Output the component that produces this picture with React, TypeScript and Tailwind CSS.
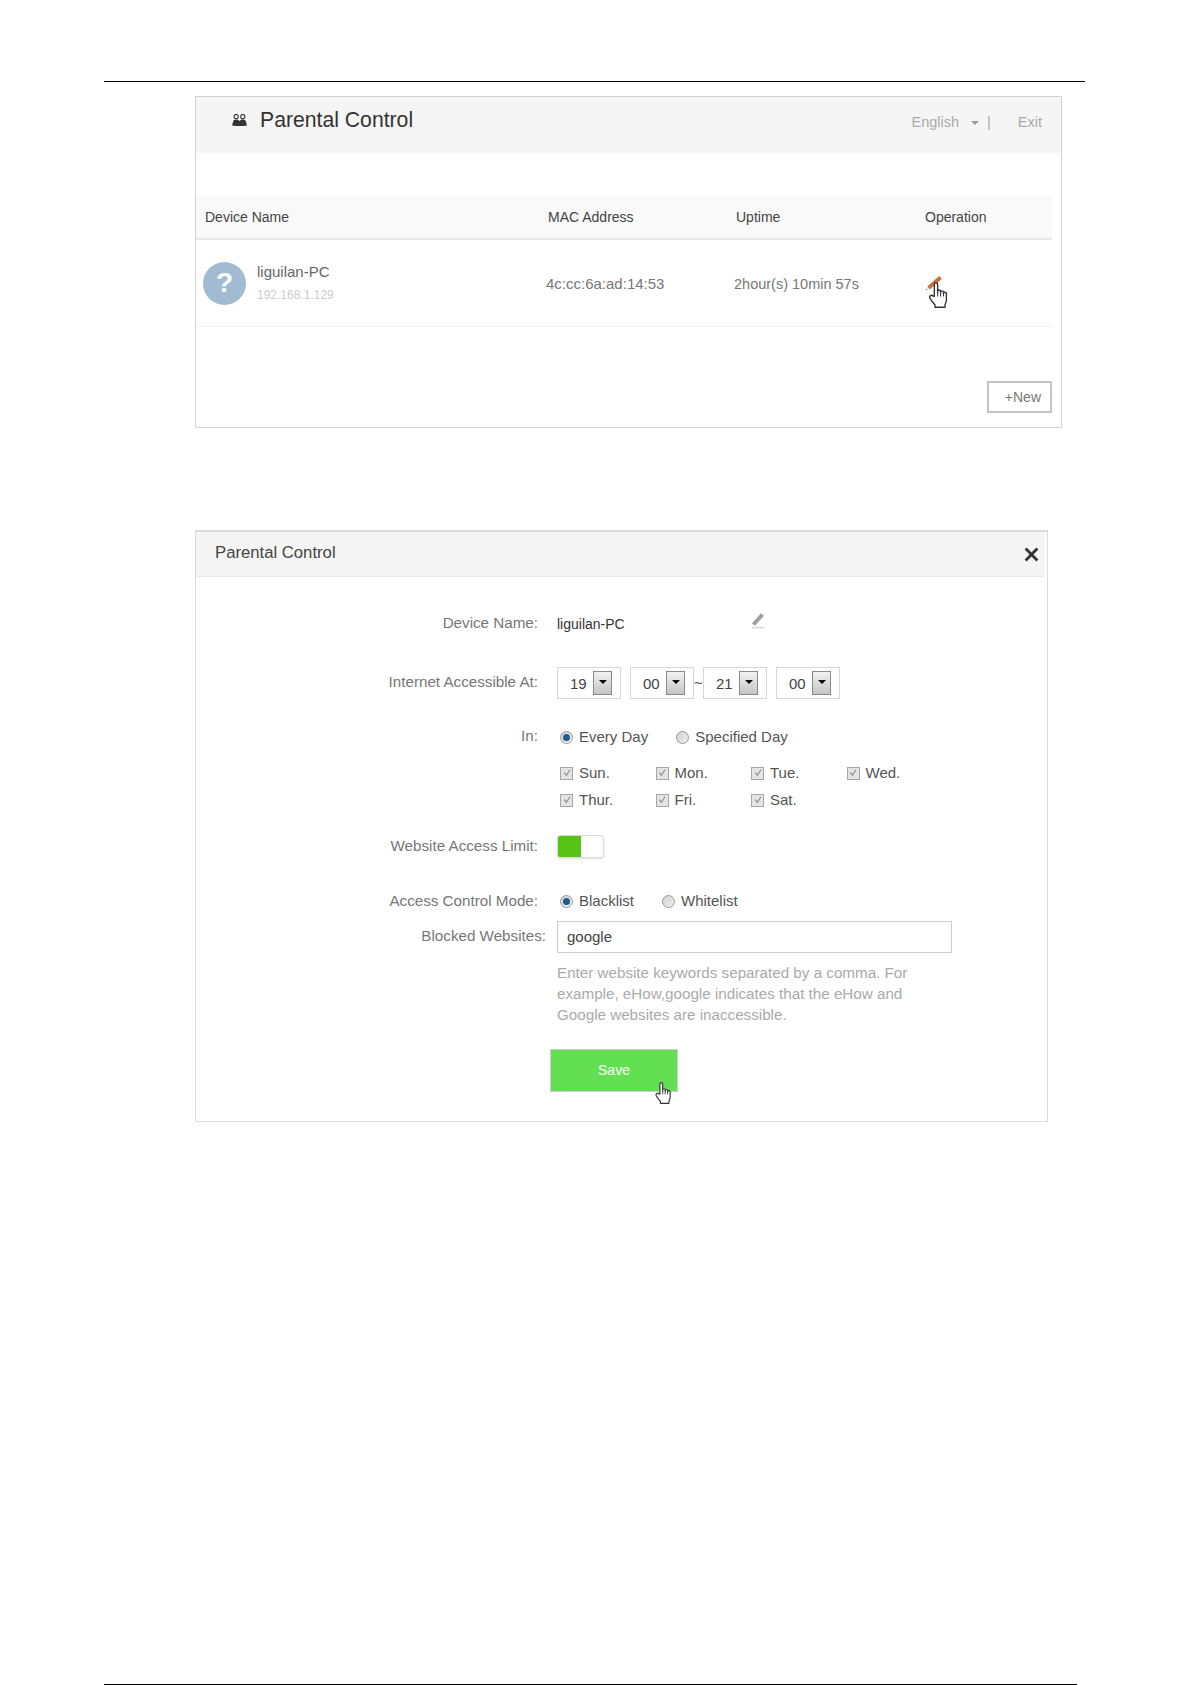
const font = "font-['Liberation_Sans',Arial,sans-serif]";

function HandCursor({ className }: { className: string }) {
  return (
    <svg viewBox="1 1 16.6 23.2" className={className}>
      <path
        d="M6 14V3.2C6 1.2 9 1.2 9 3.2V10.5V9.3C9 7.8 11.6 7.8 11.6 9.3V11V10C11.6 8.6 14.2 8.6 14.2 10V11.6V11C14.2 9.8 16.8 9.8 16.8 11.2V17C16.8 19 16 20 15.6 21.2V23.5H6.6V21.5C5.4 19.6 3.6 18.2 2.2 15.6C1 13.2 3.6 12 5 13.6Z"
        fill="#fff"
        stroke="#333"
        strokeWidth="1.2"
        strokeLinejoin="round"
      />
      <path d="M9 10.5V14M11.6 11V14M14.2 11.6V14" stroke="#333" strokeWidth="0.9" />
    </svg>
  );
}

function Radio({ on }: { on?: boolean }) {
  return (
    <span className="flex h-[13px] w-[13px] shrink-0 items-center justify-center rounded-full border border-[#9a9a9a] bg-gradient-to-br from-[#cfcfcf] to-[#f0f0f0]">
      {on && <span className="h-[7px] w-[7px] rounded-full bg-[#1d5f8c]" />}
    </span>
  );
}

function Check() {
  return (
    <span className="flex h-[13px] w-[13px] shrink-0 items-center justify-center border-[1.5px] border-[#a6a6a6] bg-[#e4e4e4]">
      <svg viewBox="0 0 11 11" className="h-[10px] w-[10px]">
        <path d="M2.5 5L4.8 8L8.8 2" fill="none" stroke="#8a8a8a" strokeWidth="1.2" />
      </svg>
    </span>
  );
}

function Day({ label }: { label: string }) {
  return (
    <div className="flex w-[95.5px] items-center gap-[6px]">
      <Check />
      <span>{label}</span>
    </div>
  );
}

function TimeSelect({ value }: { value: string }) {
  return (
    <div className="flex h-[32px] w-[64px] items-center border border-[#d6d6d6] pl-[12px]">
      <span className="mt-[3px] w-[23px] text-[#444]">{value}</span>
      <span className="flex h-[24px] w-[19px] items-start justify-center border border-[#8a8a8a] bg-gradient-to-b from-[#f2f2f2] to-[#c4c4c4] pt-[8px]">
        <span className="h-0 w-0 border-x-[4px] border-t-[4px] border-x-transparent border-t-black" />
      </span>
    </div>
  );
}

function Label({ text, raised }: { text: string; raised?: boolean }) {
  return (
    <div className={`${raised ? "-mt-[2px]" : ""} w-[342px] shrink-0 text-right text-[15.2px] text-[#777]`}>
      {text}
    </div>
  );
}

export default function App() {
  return (
    <div className={`${font} flex h-[1685px] flex-col bg-white pt-[81px] text-[14px]`}>
      <div className="ml-[104px] mr-[107px] h-px shrink-0 bg-black" />

      {/* device list */}
      <div className="ml-[195px] mt-[14px] h-[332px] w-[867px] shrink-0 border border-[#d2d2d2]">
        <div className="flex h-[56px] items-center bg-[#f5f5f5] pl-[36px] pr-[19px]">
          <svg viewBox="0 0 15 12" className="mb-[10px] h-[12px] w-[15px]">
            <circle cx="4.2" cy="2.6" r="2.100" fill="none" stroke="#333" strokeWidth="1.100" />
            <circle cx="10.8" cy="2.6" r="2.100" fill="none" stroke="#333" strokeWidth="1.100" />
            <path d="M1.500 6.500L3 5.500H5.500L7.500 7L9.500 5.500H12L13.500 6.500L15 11.500Q7.500 12.500 0 11.500Z" fill="#333" />
          </svg>
          <h1 className="mb-[10px] ml-[13px] text-[21.2px] text-[#333]">Parental Control</h1>
          <div className="mb-[4px] ml-auto flex items-center text-[14.5px] text-[#aaa]">
            <span>English</span>
            <span className="ml-[12px] h-0 w-0 border-x-[4px] border-t-[4px] border-x-transparent border-t-[#999]" />
            <span className="ml-[8px]">|</span>
            <span className="ml-[27px]">Exit</span>
          </div>
        </div>

        <div className="mr-[9px] mt-[43px] flex h-[44px] items-center border-b-2 border-[#e8e8e8] bg-[#f9f9f9] text-[#444]">
          <div className="w-[352px] pl-[9px]">Device Name</div>
          <div className="w-[188px]">MAC Address</div>
          <div className="w-[189px]">Uptime</div>
          <div>Operation</div>
        </div>

        <div className="relative mr-[9px] flex h-[87px] items-center border-b border-[#f2f2f2] text-[15px] text-[#777]">
          <div className="ml-[7px] flex h-[43px] w-[43px] shrink-0 items-center justify-center rounded-full bg-[#a3bbd2] text-[28px] font-bold text-white">
            ?
          </div>
          <div className="ml-[11px] w-[289px] shrink-0">
            <div className="-mt-[1px] text-[#666]">liguilan-PC</div>
            <div className="mt-[2px] text-[12px] text-[#ccc]">192.168.1.129</div>
          </div>
          <div className="w-[188px] shrink-0 pt-[2px]">4c:cc:6a:ad:14:53</div>
          <div className="w-[191px] shrink-0 pt-[3px] text-[14.5px]">2hour(s) 10min 57s</div>
          <svg viewBox="0 0 18 16" className="h-[16px] w-[18px]">
            <path d="M3.500 13L15.500 2.500" stroke="#c87138" strokeWidth="4" />
            <circle cx="1.500" cy="14.500" r="1" fill="#d89a70" />
          </svg>
          <HandCursor className="absolute left-[732px] top-[42px] h-[26px] w-[20px]" />
        </div>

        <div className="mr-[9px] mt-[54px] flex justify-end">
          <div className="flex h-[32px] w-[65px] items-center justify-end border-2 border-[#c4c4c4] pr-[9px] text-[#777]">
            +New
          </div>
        </div>
      </div>

      {/* edit dialog */}
      <div className="relative ml-[195px] mt-[102px] h-[592px] w-[853px] shrink-0 border border-t-2 border-[#dcdcdc] text-[15px] text-[#555]">
        <div className="mr-[3px] flex h-[45px] items-center justify-between border-b border-[#e8e8e8] bg-[#f5f5f5] pl-[19px] pr-[5px]">
          <span className="-mt-[2px] text-[16.7px] text-[#444]">Parental Control</span>
          <svg viewBox="0 0 14 14" className="h-[15px] w-[15px]">
            <path d="M1.500 1.500L12.500 12.500M12.500 1.500L1.500 12.500" stroke="#333" strokeWidth="2.600" />
          </svg>
        </div>

        <div className="mt-[35px] flex h-[24px] items-center">
          <Label text="Device Name:" raised />
          <span className="ml-[19px] w-[194px] text-[14px] text-[#333]">liguilan-PC</span>
          <svg viewBox="0 0 15 17" className="mb-[7px] h-[17px] w-[15px]">
            <path d="M2.500 12.500L11.500 2.500" stroke="#a0a0a0" strokeWidth="4" />
            <path d="M1 15.800H13" stroke="#c4c4c4" strokeWidth="1" />
          </svg>
        </div>

        <div className="mt-[31px] flex h-[32px] items-center">
          <Label text="Internet Accessible At:" raised />
          <div className="ml-[19px] flex items-center">
            <TimeSelect value="19" />
            <div className="w-[9px]" />
            <TimeSelect value="00" />
            <span className="w-[9px] text-center text-[#444]">~</span>
            <TimeSelect value="21" />
            <div className="w-[9px]" />
            <TimeSelect value="00" />
          </div>
        </div>

        <div className="mt-[26px] flex h-[24px] items-center">
          <Label text="In:" raised />
          <div className="ml-[22px] flex items-center gap-[6px]">
            <Radio on />
            <span>Every Day</span>
            <span className="ml-[22px]"><Radio /></span>
            <span>Specified Day</span>
          </div>
        </div>

        <div className="ml-[364px] mt-[12px] flex h-[24px] items-center">
          <Day label="Sun." />
          <Day label="Mon." />
          <Day label="Tue." />
          <Day label="Wed." />
        </div>
        <div className="ml-[364px] mt-[3px] flex h-[24px] items-center">
          <Day label="Thur." />
          <Day label="Fri." />
          <Day label="Sat." />
        </div>

        <div className="mt-[23px] flex h-[23px] items-center">
          <Label text="Website Access Limit:" />
          <div className="ml-[19px] flex h-[23px] w-[47px] overflow-hidden rounded-[3px] border border-[#dcdcdc] bg-white shadow-sm">
            <div className="w-[23px] bg-[#56c316]" />
          </div>
        </div>

        <div className="mt-[31px] flex h-[24px] items-center">
          <Label text="Access Control Mode:" />
          <div className="ml-[22px] flex items-center gap-[6px]">
            <Radio on />
            <span>Blacklist</span>
            <span className="ml-[22px]"><Radio /></span>
            <span>Whitelist</span>
          </div>
        </div>

        <div className="mt-[8px] flex h-[32px] items-center">
          <div className="-mt-[1px] w-[350px] shrink-0 text-right text-[15.2px] text-[#777]">Blocked Websites:</div>
          <div className="ml-[11px] flex h-[32px] w-[395px] items-center border border-[#cfcfcf] pl-[9px] text-[#444]">
            google
          </div>
        </div>

        <div className="ml-[361px] mt-[9px] w-[360px] text-[15.2px] leading-[21px] text-[#aaa]">
          Enter website keywords separated by a comma. For example, eHow,google indicates that the eHow and Google websites are inaccessible.
        </div>

        <div className="relative ml-[354px] mt-[24px] flex h-[43px] w-[128px] items-center justify-center border border-[#cfcfcf] bg-[#63e052] text-[14px] text-white">
          Save
          <HandCursor className="absolute left-[103px] top-[32px] h-[22px] w-[18px]" />
        </div>
      </div>

      <div className="mt-auto flex h-px shrink-0 pl-[104px]">
        <div className="h-px w-[973px] bg-black" />
      </div>
    </div>
  );
}
